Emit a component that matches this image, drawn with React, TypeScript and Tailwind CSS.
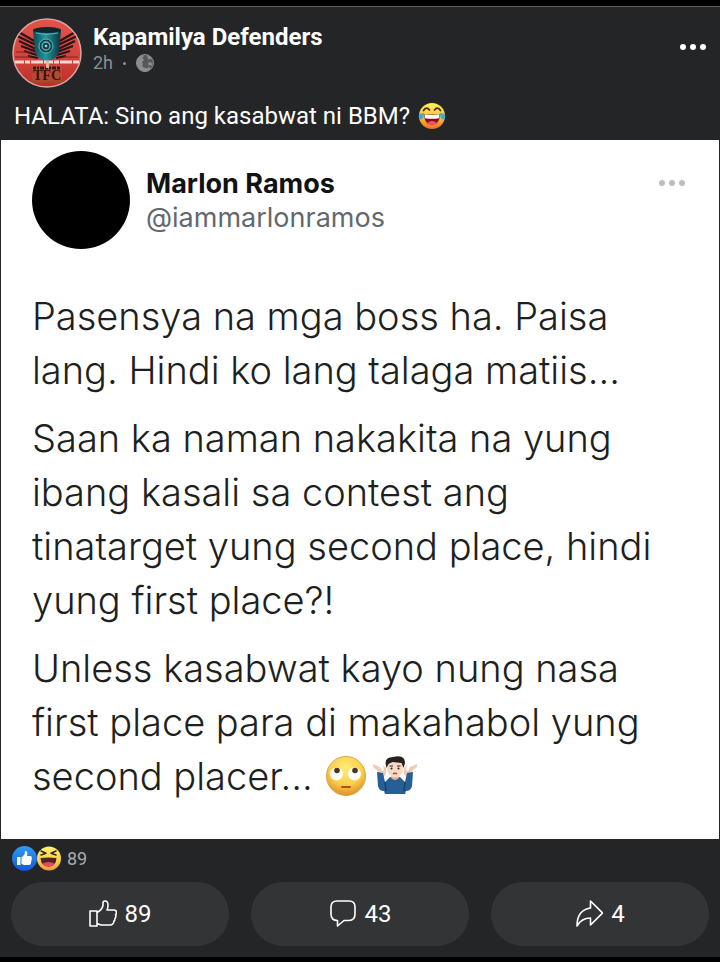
import type { ReactNode } from "react";

type ActionButtonProps = {
  label: string;
  count: number;
  children: ReactNode;
};

const FIRST_PARAGRAPH = ["Pasensya na mga boss ha. Paisa", "lang. Hindi ko lang talaga matiis..."];

const SECOND_PARAGRAPH = [
  "Saan ka naman nakakita na yung",
  "ibang kasali sa contest ang",
  "tinatarget yung second place, hindi",
  "yung first place?!",
];

function PageAvatar() {
  return (
    <svg viewBox="0 0 70 70" className="size-[70px] shrink-0" role="img" aria-label="Kapamilya Defenders">
      <defs>
        <linearGradient id="avatar-bg" x1="0" y1="0" x2="0" y2="1">
          <stop offset="0" stopColor="#e4524c" />
          <stop offset="0.6" stopColor="#d2423b" />
          <stop offset="1" stopColor="#b92d22" />
        </linearGradient>
        <linearGradient id="avatar-mug" x1="0" y1="0" x2="1" y2="0">
          <stop offset="0" stopColor="#0b4a55" />
          <stop offset="0.45" stopColor="#2596a0" />
          <stop offset="1" stopColor="#08323d" />
        </linearGradient>
        <clipPath id="avatar-clip">
          <circle cx="35" cy="35" r="34" />
        </clipPath>
      </defs>
      <g clipPath="url(#avatar-clip)">
        <rect width="70" height="70" fill="url(#avatar-bg)" />
        <g fill="none" stroke="#2a1415" strokeWidth="2.2">
          <path d="M24 24 5 13M24 27 5 18M24 31 7 23M25 34 9 28M25 37 12 33M26 40 16 38" />
          <path d="M46 24 65 13M46 27 65 18M46 31 63 23M45 34 61 28M45 37 58 33M44 40 54 38" />
        </g>
        <path d="M4 34h16M3 39h15M52 39h14" stroke="#7c2422" strokeWidth="1" />
        <path d="M21 12q14-5 28 0l-2 21q-2 9-12 10-10-1-12-10Z" fill="url(#avatar-mug)" />
        <ellipse cx="35" cy="12" rx="14" ry="3" fill="#12252b" />
        <path d="M24 15q10 3 22 0" fill="none" stroke="#51b9bd" strokeWidth="1" />
        <circle cx="34" cy="28" r="7" fill="#0e3f4a" stroke="#65b9b5" strokeWidth="1" />
        <circle cx="34" cy="28" r="4" fill="none" stroke="#65b9b5" strokeWidth="1.3" />
        <circle cx="34" cy="28" r="1.3" fill="#9ad8d0" />
        <path d="M20 47h30v16H20z" fill="#a5643d" opacity="0.4" />
        <path d="M3 44h64" stroke="#f3d8d2" strokeWidth="3" strokeDasharray="9 1 5 1 12 1" />
        <path d="M21 50h28" stroke="#3b1713" strokeWidth="3" strokeDasharray="3 1 2 1 4 1" />
        <path d="M34 43h3v7h-3z" fill="#dfb39d" />
        <path d="M17 64h36" stroke="#9b4b29" strokeWidth="2" />
        <text x="35" y="62" textAnchor="middle" fill="#351412" className="font-['Liberation_Serif',serif] text-[14px] font-bold">
          TFC
        </text>
      </g>
      <circle cx="35" cy="35" r="34" fill="none" stroke="#d9a6a3" strokeWidth="1.5" />
    </svg>
  );
}

function GlobeIcon() {
  return (
    <svg viewBox="0 0 18 18" className="size-[18px]" role="img" aria-label="Public">
      <circle cx="9" cy="9" r="8.500" fill="#55575a" stroke="#8b8d90" />
      <path d="M1 5 5 1l3 .5L6.500 4 8 6 6 8l1 2-1 2 2 1.500 3 1 2-1.500 1.500 1-2 3-4 1-5-2L.500 10Z" fill="#8b8d90" />
      <path d="m11 1 3 1.500 2.500 3.500-2-1-2 .5-1-2Z" fill="#8b8d90" />
      <path d="m12 9 2-1 2.500 1.500-1 2.500-2-1-1 .5Z" fill="#8b8d90" />
    </svg>
  );
}

function MoreIcon({ className }: { className: string }) {
  return (
    <svg viewBox="0 0 26 6" className={className} fill="currentColor" aria-hidden="true">
      <circle cx="3" cy="3" r="3" />
      <circle cx="13" cy="3" r="3" />
      <circle cx="23" cy="3" r="3" />
    </svg>
  );
}

function JoyEmoji() {
  return (
    <svg viewBox="0 0 28 28" className="size-7" role="img" aria-label="Face with tears of joy">
      <defs>
        <linearGradient id="joy-face" x1="0" y1="0" x2="0" y2="1">
          <stop offset="0" stopColor="#fff05a" />
          <stop offset="0.55" stopColor="#fbc436" />
          <stop offset="1" stopColor="#ee6d24" />
        </linearGradient>
      </defs>
      <circle cx="14" cy="14" r="13" fill="url(#joy-face)" />
      <path d="M5.500 8.500Q8.500 4 11.500 8M16.500 8q3-4 6 .5" fill="none" stroke="#4b2a12" strokeWidth="1.700" strokeLinecap="round" />
      <path d="M6 12q8 1 16 0-.5 11-8 11t-8-11Z" fill="#85121b" />
      <path d="M6.500 12.200q7.500 1.500 15 0l-.5 4q-7 1.300-14 0Z" fill="#fff" />
      <path d="M9 21q5-4 10 0-5 4-10 0Z" fill="#f0526a" />
      <path d="M6 11q-5 0-5.500 3.500Q1 18 4 17q2-1 2-6ZM22 11q5 0 5.500 3.500Q27 18 24 17q-2-1-2-6Z" fill="#43a9cf" />
    </svg>
  );
}

function RollingEyesEmoji() {
  return (
    <svg viewBox="0 0 42 42" className="size-[42px]" role="img" aria-label="Face with rolling eyes">
      <defs>
        <radialGradient id="roll-face" cx="0.5" cy="0.3" r="0.7">
          <stop offset="0" stopColor="#ffec78" />
          <stop offset="0.6" stopColor="#fbcf4b" />
          <stop offset="1" stopColor="#dd9127" />
        </radialGradient>
      </defs>
      <circle cx="21" cy="21" r="19.500" fill="url(#roll-face)" stroke="#d9a844" strokeWidth="1" />
      <circle cx="11.500" cy="19" r="6.500" fill="#fffdf5" />
      <circle cx="29.500" cy="19" r="6.500" fill="#fffdf5" />
      <circle cx="12" cy="15.500" r="2.800" fill="#4b3322" />
      <circle cx="30" cy="15.500" r="2.800" fill="#4b3322" />
      <path d="M17 32h8" stroke="#b84a20" strokeWidth="2" strokeLinecap="round" />
    </svg>
  );
}

function ShrugEmoji() {
  return (
    <svg viewBox="0 0 44 42" className="h-[42px] w-11" role="img" aria-label="Man shrugging">
      <path d="m0 9 7 3 2 4 2-1-1-5 3 3v6l-3 4-4-4-2-4-4-3ZM44 9l-7 3-2 4-2-1 1-5-3 3v6l3 4 4-4 2-4 4-3Z" fill="#efccb5" />
      <path d="m4 17 6 1 2 9 5-5h10l5 5 2-9 6-1-1 14q-1 5-6 5l-1 3H12l-1-3q-5 0-6-5Z" fill="#285e96" />
      <path d="m12 27 1 9M32 27l-1 9" stroke="#173f70" strokeWidth="1.500" />
      <path d="M18 18h8v5q-4 4-8 0Z" fill="#dfae93" />
      <ellipse cx="22" cy="13" rx="8" ry="9.500" fill="#f6d8c4" />
      <path d="M13.500 13Q10 2 20 2q12-3 12 6l-1.500 5-2-5-9-1-4 2Z" fill="#26211f" />
      <path d="M16.500 11h3.500M24 11h3.500" stroke="#3a2820" strokeWidth="1" />
      <circle cx="18.500" cy="13.500" r="1" fill="#2a211e" />
      <circle cx="25.500" cy="13.500" r="1" fill="#2a211e" />
      <path d="M20 19q2-1.500 4 0" fill="none" stroke="#a04c3c" strokeWidth="1.500" />
    </svg>
  );
}

function LikeReaction() {
  return (
    <svg viewBox="0 0 25 25" className="size-[25px]" role="img" aria-label="Like">
      <defs>
        <linearGradient id="like-bg" x1="0" y1="0" x2="0" y2="1">
          <stop offset="0" stopColor="#2e9bf4" />
          <stop offset="1" stopColor="#1458d8" />
        </linearGradient>
      </defs>
      <circle cx="12.500" cy="12.500" r="12.500" fill="url(#like-bg)" />
      <path
        d="M5 11h3.500v8H5ZM9.500 11.500l3-3 .5-3.500q2.800-.2 2.300 3.500L15 10h3.500q1.800.3 1.300 2.300l-.9 5.200q-.5 1.500-2 1.500h-4.700l-2.700-1Z"
        fill="#fff"
      />
    </svg>
  );
}

function HahaReaction() {
  return (
    <svg viewBox="0 0 25 25" className="size-[25px]" role="img" aria-label="Haha">
      <defs>
        <linearGradient id="haha-bg" x1="0" y1="0" x2="0" y2="1">
          <stop offset="0" stopColor="#fff070" />
          <stop offset="0.6" stopColor="#fbcf4d" />
          <stop offset="1" stopColor="#ef9440" />
        </linearGradient>
      </defs>
      <circle cx="12" cy="12.500" r="12" fill="url(#haha-bg)" />
      <path d="m4 5 5 2.300-5 1.700M19 5l-5 2.300 5 1.700" fill="none" stroke="#35261a" strokeWidth="1.500" strokeLinecap="round" strokeLinejoin="round" />
      <path d="M3.500 12q8-1 16 0-.5 8.500-8 8.500t-8-8.500Z" fill="#512226" />
      <path d="M5.500 17.500q6-3 12 0-2 3-6 3t-6-3Z" fill="#e94861" />
    </svg>
  );
}

function ActionButton({ label, count, children }: ActionButtonProps) {
  return (
    <button
      type="button"
      aria-label={`${label} ${count}`}
      className="flex h-16 flex-1 items-center justify-center gap-2 rounded-full bg-[#333436] text-2xl text-white hover:bg-[#3c3d3f]"
    >
      <svg viewBox="0 0 28 28" className="size-7" fill="none" stroke="currentColor" strokeWidth="1.600" strokeLinejoin="round" strokeLinecap="round" aria-hidden="true">
        {children}
      </svg>
      <span>{count}</span>
    </button>
  );
}

export default function App() {
  return (
    <main className="border-y-[6px] border-b-[5px] border-black bg-[#242527] font-['Roboto',sans-serif] text-white">
      <article className="border-t border-[#5d5e61]">
        <header className="flex items-start gap-[11px] px-3 pt-[11px]">
          <PageAvatar />
          <div className="flex-1 pt-1">
            <h1 className="text-2xl leading-[30px] font-bold">Kapamilya Defenders</h1>
            <div className="flex items-center gap-2.5 text-lg leading-[22px] text-[#8b8d90]">
              <span>2h</span>
              <span className="size-[3px] rounded-full bg-[#8b8d90]" />
              <GlobeIcon />
            </div>
          </div>
          <button type="button" aria-label="Post options" className="mt-[26px] mr-[2px]">
            <MoreIcon className="h-1.5 w-[26px]" />
          </button>
        </header>

        <p className="flex h-[52px] items-center gap-2 px-3.5 pt-1 text-2xl">
          HALATA: Sino ang kasabwat ni BBM?
          <JoyEmoji />
        </p>

        <section className="mx-px bg-white px-[31px] pt-[11px] pb-9 font-['Inter',sans-serif] text-[#1d1f21]">
          <div className="flex items-start">
            <div className="size-[98px] shrink-0 rounded-full bg-black" />
            <div className="flex-1 pt-4 pl-4">
              <h2 className="text-[27px] leading-[34px] font-bold text-[#101214]">Marlon Ramos</h2>
              <p className="text-[27px] leading-[34px] text-[#62696e]">@iammarlonramos</p>
            </div>
            <button type="button" aria-label="Tweet options" className="mt-[29px] mr-[3px] text-[#b9bdc0]">
              <MoreIcon className="h-1.5 w-[26px]" />
            </button>
          </div>

          <div className="mt-10 space-y-3.5 text-[38px] leading-[54px] font-[350] whitespace-nowrap">
            <p>
              {FIRST_PARAGRAPH.map((line) => (
                <span key={line} className="block">
                  {line}
                </span>
              ))}
            </p>
            <p>
              {SECOND_PARAGRAPH.map((line) => (
                <span key={line} className="block">
                  {line}
                </span>
              ))}
            </p>
            <p>
              <span className="block">Unless kasabwat kayo nung nasa</span>
              <span className="block">first place para di makahabol yung</span>
              <span className="flex items-center">
                second placer...
                <span className="ml-3 flex gap-1.5">
                  <RollingEyesEmoji />
                  <ShrugEmoji />
                </span>
              </span>
            </p>
          </div>
        </section>

        <div className="flex h-[43px] items-center px-3 pb-1 text-lg text-[#a9abae]">
          <LikeReaction />
          <HahaReaction />
          <span className="ml-[5px]">89</span>
        </div>

        <footer className="flex gap-[22px] px-[11px] pb-[11px]">
          <ActionButton label="Like" count={89}>
            <path d="M1 11h7v15H1ZM8 12.500q5-2.500 6-7V3q0-2 2-2 3 0 3 4 0 3-1 5h7q2.500 0 2.500 2.500 0 1.500-1 2.500 1 1.500-.5 3.500 0 2-1 2.500-.5 4-4 4H12l-4-1.500" />
          </ActionButton>
          <ActionButton label="Comment" count={43}>
            <path d="M8 1h12q6 0 6 6v7q0 6.500-6 6.500h-5L8.500 26v-5.500Q2 20.500 2 14V7q0-6 6-6Z" />
          </ActionButton>
          <ActionButton label="Share" count={4}>
            <path d="M15.500 1v7Q2 10 2 26q4.500-8 13.500-8v7l12-12Z" />
          </ActionButton>
        </footer>
      </article>
    </main>
  );
}
